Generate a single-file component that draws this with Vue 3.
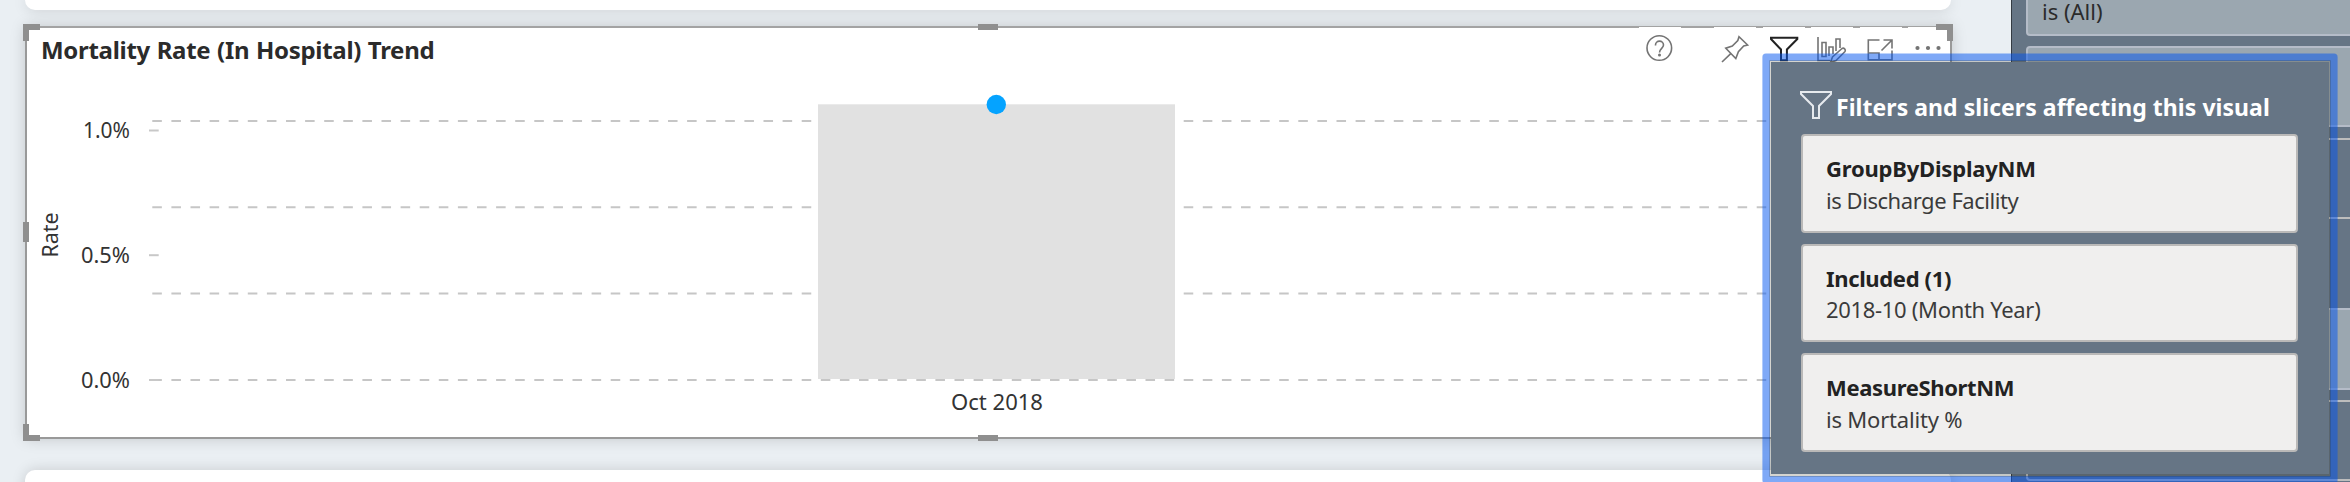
<script setup>
const handles = ['tl', 'tc', 'tr', 'ml', 'bl', 'bc', 'br']
const gridLines = [121, 207.2, 293.6, 380]
const ticks = [
  { label: '1.0%', y: 130.5, x: 83, w: 47 },
  { label: '0.5%', y: 255.2, x: 81, w: 49 },
  { label: '0.0%', y: 380, x: 81, w: 49 },
]
const filters = [
  { name: 'GroupByDisplayNM', value: 'is Discharge Facility', cls: 'group' },
  { name: 'Included (1)', value: '2018-10 (Month Year)', cls: 'included' },
  { name: 'MeasureShortNM', value: 'is Mortality %', cls: 'measure' },
]
</script>

<template>
  <div class="page">
    <main class="canvas">
      <div class="card card-top"></div>
      <section class="visual">
        <header class="visual-header">
          <h2 class="title">Mortality Rate (In Hospital) Trend</h2>
          <div class="tools">
            <span class="tool help">
              <svg viewBox="0 0 42 42" class="ico">
                <circle cx="20.300" cy="21" r="12.300" />
                <path d="M16.500 18.600v-.5a4 4 0 0 1 8 0c0 3-4 3.600-4 7.400" />
                <circle cx="20.500" cy="28" r=".7" class="solid" />
              </svg>
            </span>
            <span class="tool">
              <svg viewBox="0 0 42 42" class="ico">
                <path d="M8 35L16.500 26.800M11.800 21.200L21.800 31.500L24.400 24.700L29.700 19L33.600 18L25 9.700L23.800 13.500L18.300 19Z" />
              </svg>
            </span>
            <span class="tool">
              <svg viewBox="0 0 42 42" class="ico dark">
                <path d="M8 10.700H34.300V12L23.900 22.500V33.300H18V22.500L8 12Z" />
              </svg>
            </span>
            <span class="tool">
              <svg viewBox="0 0 42 42" class="ico">
                <path d="M7 10V33.500H19M11 15.500h4v14h-4zM18 29V20h4v7M25 24V12h4v9" />
                <path d="M31 21.500l-9.500 8.500-2 5.500 5.500-2 9-9a2.200 2.200 0 0 0-3-3z" class="pencil" />
              </svg>
            </span>
            <span class="tool">
              <svg viewBox="0 0 42 42" class="ico">
                <path d="M19.500 13H8.300V32.800H32V23.500M8.300 26h10.700v6.800M21.500 23.500L32 13M23.500 13H32V21.500" />
              </svg>
            </span>
            <span class="tool">
              <svg viewBox="0 0 42 42" class="ico">
                <circle cx="9.500" cy="21" r="1.300" class="solid" />
                <circle cx="20" cy="21" r="1.300" class="solid" />
                <circle cx="30.500" cy="21" r="1.300" class="solid" />
              </svg>
            </span>
          </div>
        </header>
        <svg class="chart" viewBox="27 70 1923 367">
          <line v-for="y in gridLines" :key="y" x1="152.300" x2="1913" :y1="y" :y2="y" class="grid" />
          <rect x="818" y="104.300" width="357" height="274.700" class="bar" />
          <g v-for="t in ticks" :key="t.label">
            <line x1="149" x2="158.700" :y1="t.y" :y2="t.y" class="tick" />
            <text :x="t.x" :y="t.y + 7.500" :textLength="t.w" lengthAdjust="spacingAndGlyphs">{{ t.label }}</text>
          </g>
          <circle cx="996.300" cy="104.500" r="9.700" class="dot" />
          <text x="951" y="409.500" textLength="92" lengthAdjust="spacingAndGlyphs">Oct 2018</text>
          <text transform="translate(58 257.500) rotate(-90)" textLength="45" lengthAdjust="spacingAndGlyphs">Rate</text>
        </svg>
        <i v-for="h in handles" :key="h" class="handle" :class="h"></i>
      </section>
      <div class="card card-bottom"></div>
    </main>

    <aside class="pane">
      <div class="pane-card first">is (All)</div>
      <div class="pane-card"></div>
      <div class="pane-card outline"></div>
      <div class="pane-card spaced"></div>
      <div class="pane-card outline last"></div>
    </aside>

    <div class="popover">
      <div class="pop-head">
        <svg viewBox="0 0 34 32" class="funnel">
          <path d="M2 3H32V5L20 17V29H14V17L2 5Z" />
        </svg>
        <span class="pop-title">Filters and slicers affecting this visual</span>
      </div>
      <div v-for="f in filters" :key="f.name" class="filter" :class="f.cls">
        <div><span class="name">{{ f.name }}</span></div>
        <div><span class="value">{{ f.value }}</span></div>
      </div>
    </div>
  </div>
</template>

<style>
body { margin: 0; overflow: hidden; }
</style>

<style scoped>
* { box-sizing: border-box; }
.page {
  position: relative;
  display: grid;
  grid-template-columns: 2011px 1fr;
  width: 2350px;
  height: 482px;
  overflow: hidden;
  background: #eaeff3;
  font-family: "Noto Sans", "Open Sans", sans-serif;
  font-size: 22px;
  color: #2b2b2b;
}
.canvas { padding-left: 25px; display: flex; flex-direction: column; height: 482px; overflow: hidden; }
.card { width: 1926px; background: #fff; box-shadow: 0 0 14px rgba(0, 0, 0, .15); flex: none; }
.card-top { height: 10px; border-radius: 0 0 10px 10px; }
.card-bottom { height: 30px; margin-top: 31px; border-radius: 10px 10px 0 0; }
.visual {
  position: relative;
  flex: none;
  width: 1927px;
  height: 413px;
  margin-top: 16px;
  background: #fff;
  border: 2px solid #999;
  border-top-color: #a3a3a3;
  box-shadow: 0 0 14px rgba(0, 0, 0, .17);
}
.visual-header { display: flex; justify-content: space-between; height: 42px; }
.title { margin: 5px 0 0 14px; font-size: 24px; line-height: 34px; font-weight: 700; letter-spacing: -.3px; word-spacing: .8px; white-space: nowrap; }
.tools { display: flex; gap: 6.400px; margin-top: -1px; }
.tool { width: 42px; height: 42px; background: #fff; }
.help { margin-right: 27px; }
.ico { display: block; width: 42px; height: 42px; fill: none; stroke: #747474; stroke-width: 1.600; }
.ico.dark { stroke: #222; stroke-width: 2; }
.ico .solid { fill: #747474; }
.ico .pencil { fill: #fff; }
.chart { display: block; width: 1923px; height: 367px; }
.chart text { font-size: 22px; fill: #333; }
.grid { stroke: #c6c6c6; stroke-width: 2; stroke-dasharray: 9.550 9.550; }
.tick { stroke: #c8c8c8; stroke-width: 2; }
.bar { fill: #e1e1e1; }
.dot { fill: #05a3ff; }
.handle { position: absolute; border: 0 solid #8f8f8f; width: 17px; height: 17px; }
.tl { left: -4px; top: -4px; border-width: 6px 0 0 6px; }
.tr { right: -3px; top: -4px; border-width: 6px 6px 0 0; }
.bl { left: -4px; bottom: -4px; border-width: 0 0 6px 6px; }
.br { right: -3px; bottom: -4px; border-width: 0 6px 6px 0; }
.tc { left: 951px; top: -4px; width: 20px; height: 6px; border-top-width: 6px; }
.bc { left: 951px; bottom: -4px; width: 20px; height: 6px; border-top-width: 6px; }
.ml { left: -4px; top: 194px; width: 6px; height: 20px; border-left-width: 6px; }
.pane {
  display: flex;
  flex-direction: column;
  gap: 11px;
  height: 482px;
  padding-left: 14px;
  background: #667585;
  border-left: 1px solid #343b43;
  overflow: hidden;
}
.pane-card { flex: none; width: 360px; height: 81px; background: #9ba7b0; border: 2px solid #b5bcc8; border-radius: 4px; }
.pane-card.first { height: 36px; border-top: 0; border-radius: 0 0 4px 4px; padding-left: 14px; line-height: 23px; margin-bottom: -1px; }
.pane-card.outline { background: #667585; border-color: #bdbdbd; }
.pane-card.spaced { margin-top: 78px; height: 82px; }
.pane-card.last { margin-top: -1px; }
.popover {
  position: absolute;
  left: 1769px;
  top: 60px;
  width: 562px;
  height: 417px;
  padding: 25px 31px 0 30px;
  display: flex;
  flex-direction: column;
  gap: 11px;
  background: #667585;
  background-clip: padding-box;
  border: 2px solid rgba(45, 40, 15, .2);
  border-bottom-width: 3px;
  border-radius: 1px;
  box-shadow: 0 0 0 6.600px rgba(0, 84, 240, .5);
}
.pop-head { display: flex; height: 36px; color: #fff; }
.funnel { width: 34px; height: 32px; margin: 2px 0 0 -2px; fill: none; stroke: #e6eaee; stroke-width: 2; }
.pop-title { margin-left: 3px; margin-top: 3px; line-height: 34px; font-size: 23px; font-weight: 700; letter-spacing: .05px; white-space: nowrap; }
.filter { flex: none; height: 98.500px; padding: 17px 0 0 23px; background: #f0efee; border: 2px solid #bab9b8; border-radius: 4px; line-height: 31.500px; white-space: nowrap; }
.name { font-weight: 700; color: #222; letter-spacing: -.35px; }
.group .name { letter-spacing: -.2px; }
.value { color: #3b3b3b; letter-spacing: -.45px; }
.included .value { letter-spacing: -.32px; }
.measure .value { letter-spacing: -.2px; }
</style>
